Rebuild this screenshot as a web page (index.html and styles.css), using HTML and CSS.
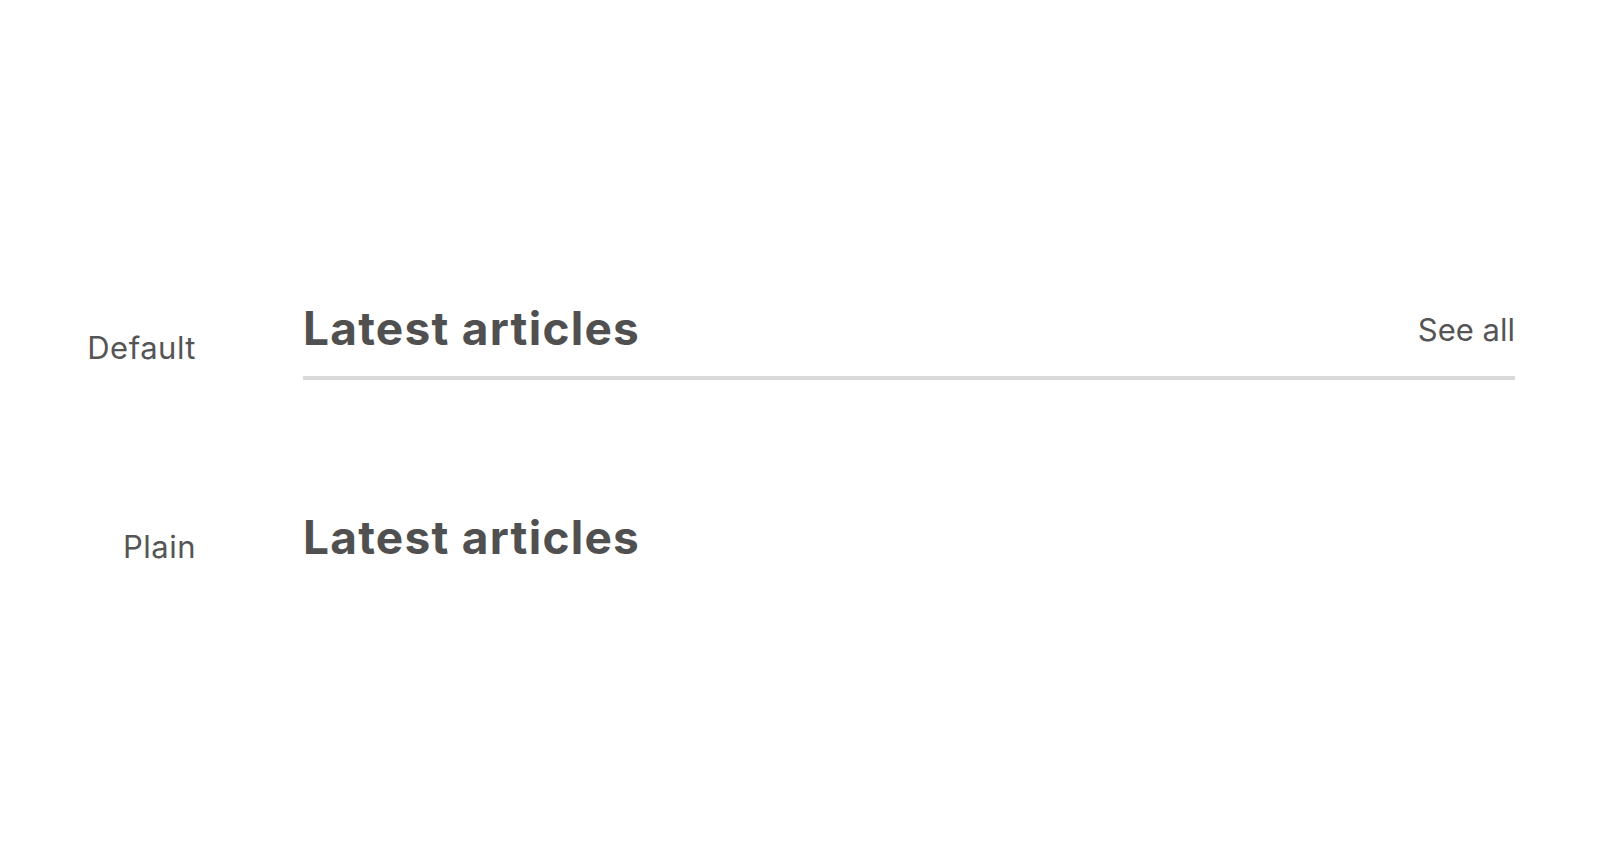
FILE: index.html
```html
<!DOCTYPE html>
<html lang="en">

<head>
    <meta charset="UTF-8">
    <meta name="viewport" content="width=device-width, initial-scale=1.0">
    <title>Section header</title>
    <link rel="stylesheet" href="styles.css">
</head>

<body>
    <div class="stage">
        <div class="row">
            <div class="label">Default</div>
            <div class="section-header section-header--default">
                <h2 class="section-title">Latest articles</h2>
                <a class="see-all" href="#">See all</a>
            </div>
        </div>
        <div class="row">
            <div class="label">Plain</div>
            <div class="section-header">
                <h2 class="section-title">Latest articles</h2>
            </div>
        </div>
    </div>
</body>

</html>
```

FILE: styles.css
```css
body {
    font-family: Inter, "Noto Sans", sans-serif;
    margin: 0;
    padding: 0;
    background-color: #fff;
    color: #555;
}

.stage {
    min-height: 100vh;
    display: flex;
    flex-direction: column;
    justify-content: center;
    gap: 129px;
    padding-right: 99px;
    box-sizing: border-box;
}

.row {
    display: grid;
    grid-template-columns: 196px 1fr;
    column-gap: 107px;
    align-items: center;
}

.label {
    text-align: right;
    font-size: 31px;
    letter-spacing: 0.5px;
    line-height: 36px;
    padding-top: 16px;
    color: #555;
}

.section-header {
    display: flex;
    justify-content: space-between;
    align-items: center;
}

.section-header--default {
    padding-bottom: 16px;
    border-bottom: 4px solid #d9d9d9;
}

.section-title {
    margin: 0;
    padding-bottom: 4px;
    font-size: 46px;
    line-height: 56px;
    font-weight: 700;
    letter-spacing: 1.25px;
    color: #505050;
}

.see-all {
    font-size: 31px;
    line-height: 36px;
    color: #555;
    text-decoration: none;
}
```
